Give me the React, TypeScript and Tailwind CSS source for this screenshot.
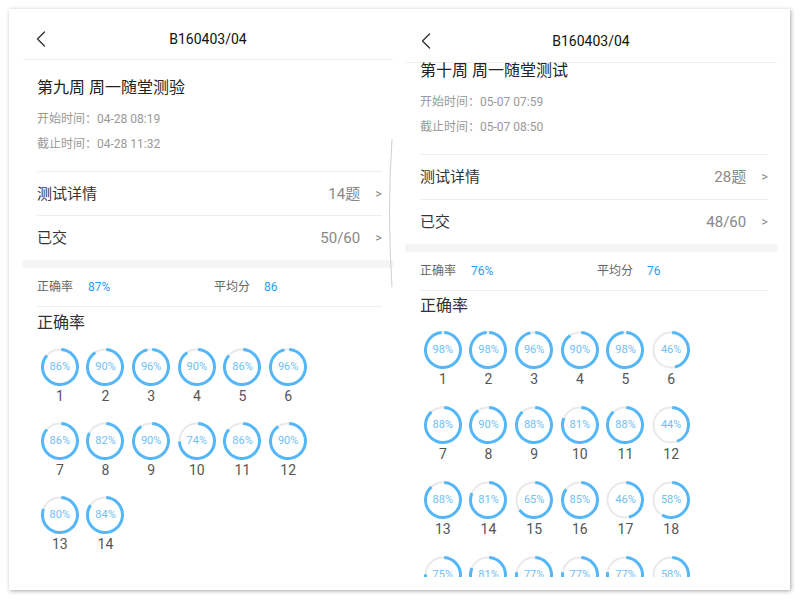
import React from "react";

const FONT = { fontFamily: 'Roboto, "Noto Sans CJK SC", sans-serif' };

const leftRates = [86, 90, 96, 90, 86, 96, 86, 82, 90, 74, 86, 90, 80, 84];
const rightRates = [
  98, 98, 96, 90, 98, 46, 88, 90, 88, 81, 88, 44, 88, 81, 65, 85, 46, 58, 75, 81, 77, 77, 77, 58,
];

function Chevron() {
  return (
    <svg width="10" height="16" viewBox="0 0 10 16" fill="none">
      <path d="M8.5 1 L1.5 8 L8.5 15" stroke="#333" strokeWidth="1.4" strokeLinecap="round" strokeLinejoin="round" />
    </svg>
  );
}

function Header({ className, padLeft }: { className: string; padLeft: string }) {
  return (
    <div className={`grid grid-cols-[1fr_auto_1fr] items-center border-b border-[#eeeeee] ${className}`}>
      <div className={padLeft}>
        <Chevron />
      </div>
      <p className="text-[14px] leading-[20px] text-[#111]">B160403/04</p>
      <div />
    </div>
  );
}

function InfoRow({ label, value, h, last }: { label: string; value: string; h: string; last?: boolean }) {
  return (
    <div className={`flex items-center justify-between ${h} ${last ? "" : "border-b border-[#eeeeee]"}`}>
      <span className="text-[15px] leading-[20px] text-[#333]">{label}</span>
      <span className="flex items-center text-[15px] leading-[20px] text-[#888]">
        {value}
        <span className="ml-[15px] text-[13px]">&gt;</span>
      </span>
    </div>
  );
}

function Stats({ rate, avg, h }: { rate: string; avg: string; h: string }) {
  return (
    <div className={`flex items-center border-b border-[#eeeeee] text-[12px] leading-[16px] ${h}`}>
      <div className="flex w-[177px] items-center">
        <span className="text-[#666]">正确率</span>
        <span className="ml-[15px] text-[#2a9df4]">{rate}</span>
      </div>
      <span className="text-[#666]">平均分</span>
      <span className="ml-[14px] text-[#2a9df4]">{avg}</span>
    </div>
  );
}

function Ring({ value, index }: { value: number; index: number }) {
  const r = 17.5;
  const c = 2 * Math.PI * r;
  const len = (c * value) / 100;
  return (
    <div className="flex flex-col items-center">
      <div className="relative h-[38px] w-[38px]">
        <svg width="38" height="38" viewBox="0 0 38 38" className="absolute inset-0">
          <circle cx="19" cy="19" r={r} fill="none" stroke="#e9e9e9" strokeWidth="2" />
          <circle
            cx="19"
            cy="19"
            r={r}
            fill="none"
            stroke="#55b7f8"
            strokeWidth="3"
            strokeDasharray={`${len - 1.2} ${c}`}
            transform="rotate(-86 19 19)"
          />
        </svg>
        <div className="flex h-full w-full items-center justify-center text-[11px] text-[#6fc0f6]">{value}%</div>
      </div>
      <span className="text-[14px] leading-[20px] text-[#555]">{index}</span>
    </div>
  );
}

function RingGrid({ rates, className }: { rates: number[]; className: string }) {
  return (
    <div className={`grid w-[274px] grid-cols-6 ${className}`}>
      {rates.map((v, i) => (
        <Ring key={i} value={v} index={i + 1} />
      ))}
    </div>
  );
}

function LeftPanel() {
  return (
    <div className="relative h-[580px] w-[370px] overflow-hidden bg-white">
      <Header className="h-[50px] pt-[8px]" padLeft="pl-[13px]" />
      <div className="pl-[14px] pr-[11px]">
        <p className="mt-[16px] text-[16px] leading-[24px] text-[#222]">第九周 周一随堂测验</p>
        <p className="mt-[9px] text-[12px] leading-[20px] text-[#999]">开始时间：04-28 08:19</p>
        <p className="mt-[5px] pb-[17px] text-[12px] leading-[20px] text-[#999] border-b border-[#eeeeee]">
          截止时间：04-28 11:32
        </p>
        <InfoRow label="测试详情" value="14题" h="h-[44px]" />
        <InfoRow label="已交" value="50/60" h="h-[44px]" last />
      </div>
      <div className="h-[8px] bg-[#f4f5f7]" />
      <div className="pl-[14px] pr-[11px]">
        <Stats rate="87%" avg="86" h="h-[39px]" />
        <p className="mt-[4px] text-[16px] leading-[24px] text-[#333]">正确率</p>
        <RingGrid rates={leftRates} className="mt-[13px] gap-y-[16px]" />
      </div>
      <svg width="6" height="150" viewBox="0 0 6 150" className="absolute right-0 top-[128px]">
        <path d="M5 1 Q0 75 5 149" fill="none" stroke="#cfcfcf" strokeWidth="1" />
      </svg>
    </div>
  );
}

function RightPanel() {
  return (
    <div className="h-[567px] w-[372px] overflow-hidden bg-white">
      <Header className="h-[53px] pt-[10px]" padLeft="pl-[16px]" />
      <div className="pl-[15px] pr-[9px]">
        <p className="text-[16px] leading-[16px] text-[#222]">第十周 周一随堂测试</p>
        <p className="mt-[13px] text-[12px] leading-[20px] text-[#999]">开始时间：05-07 07:59</p>
        <p className="mt-[5px] pb-[17px] text-[12px] leading-[20px] text-[#999] border-b border-[#eeeeee]">
          截止时间：05-07 08:50
        </p>
        <InfoRow label="测试详情" value="28题" h="h-[45px]" />
        <InfoRow label="已交" value="48/60" h="h-[44px]" last />
      </div>
      <div className="h-[8px] bg-[#f4f5f7]" />
      <div className="pl-[15px] pr-[9px]">
        <Stats rate="76%" avg="76" h="h-[39px]" />
        <p className="mt-[3px] text-[16px] leading-[24px] text-[#333]">正确率</p>
        <RingGrid rates={rightRates} className="mt-[13px] gap-y-[17px]" />
      </div>
    </div>
  );
}

export default function App() {
  return (
    <div className="h-[600px] w-[800px] bg-white pl-[9px] pt-[9px]" style={FONT}>
      <div className="flex h-[581px] w-[781px] gap-[12px] bg-white pl-[14px] pt-[1px] shadow-[1px_1px_4px_rgba(0,0,0,0.35)]">
        <LeftPanel />
        <RightPanel />
      </div>
    </div>
  );
}
